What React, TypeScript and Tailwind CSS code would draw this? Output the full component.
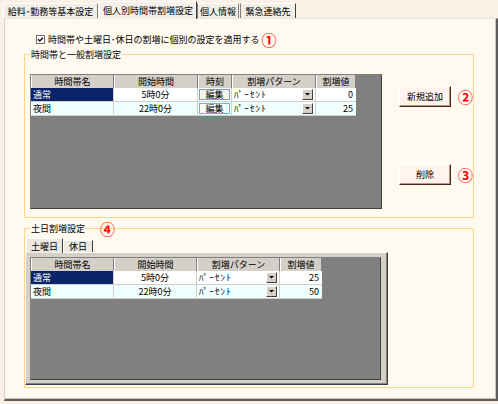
import React from "react";

const Arrow = () => (
  <div className="w-[11px] h-[11px] bg-[#D4D0C8] border border-t-white border-l-white border-r-[#404040] border-b-[#404040] flex items-center justify-center">
    <svg width="5" height="5" viewBox="0 0 5 5">
      <path d="M0 1h5L2.5 3.5z" fill="#000" />
    </svg>
  </div>
);

const H = ({ w, children }: { w: string; children: React.ReactNode }) => (
  <div
    className={`${w} h-full flex items-center justify-center bg-[#D4D0C8] border-l border-l-white border-r border-r-[#808080]`}
  >
    {children}
  </div>
);

const Pct = () => <span className="tracking-[1.2px]">ﾊﾟｰｾﾝﾄ</span>;

function Grid1() {
  return (
    <div className="w-[353px] h-[135px] bg-[#808080] border border-t-[#808080] border-l-[#808080] border-r-[#404040] border-b-[#404040] flex flex-col">
      <div className="h-[13px] flex w-[325px]">
        <H w="w-[83px]">時間帯名</H>
        <H w="w-[84px]">開始時間</H>
        <H w="w-[34px]">時刻</H>
        <H w="w-[84px]">割増パターン</H>
        <H w="w-[40px]">割増値</H>
      </div>
      <div className="h-[14px] flex w-[325px] bg-white border-b border-[#D4D0C8]">
        <div className="w-[83px] bg-[#0A246A] text-white flex items-center pl-[2px] border-r border-[#D4D0C8]">通常</div>
        <div className="w-[84px] flex items-center justify-center border-r border-[#D4D0C8]">5時0分</div>
        <div className="w-[34px] flex items-center justify-center p-[1px] border-r border-[#D4D0C8]">
          <div className="w-full h-full border border-[#7F9DB9] bg-[#F4F3EE] flex items-center justify-center">編集</div>
        </div>
        <div className="w-[84px] flex items-center justify-between pl-[2px] pr-[2px] border-r border-[#D4D0C8]">
          <Pct />
          <Arrow />
        </div>
        <div className="w-[40px] flex items-center justify-end pr-[3px]">0</div>
      </div>
      <div className="h-[14px] flex w-[325px] bg-[#F0FFFF] border-b border-[#D4D0C8]">
        <div className="w-[83px] flex items-center pl-[2px] border-r border-[#D4D0C8]">夜間</div>
        <div className="w-[84px] flex items-center justify-center border-r border-[#D4D0C8]">22時0分</div>
        <div className="w-[34px] flex items-center justify-center p-[1px] border-r border-[#D4D0C8]">
          <div className="w-full h-full border border-[#4FC7C7] bg-[#F8FDFD] flex items-center justify-center">編集</div>
        </div>
        <div className="w-[84px] flex items-center justify-between pl-[2px] pr-[2px] border-r border-[#D4D0C8]">
          <Pct />
          <Arrow />
        </div>
        <div className="w-[40px] flex items-center justify-end pr-[3px]">25</div>
      </div>
    </div>
  );
}

function Grid2() {
  return (
    <div className="w-[351px] h-[123px] bg-[#808080] border border-t-[#808080] border-l-[#808080] border-r-[#404040] border-b-[#404040] flex flex-col">
      <div className="h-[13px] flex w-[291px]">
        <H w="w-[83px]">時間帯名</H>
        <H w="w-[83px]">開始時間</H>
        <H w="w-[83px]">割増パターン</H>
        <H w="w-[42px]">割増値</H>
      </div>
      <div className="h-[14px] flex w-[291px] bg-white border-b border-[#D4D0C8]">
        <div className="w-[83px] bg-[#0A246A] text-white flex items-center pl-[2px] border-r border-[#D4D0C8]">通常</div>
        <div className="w-[83px] flex items-center justify-center border-r border-[#D4D0C8]">5時0分</div>
        <div className="w-[83px] flex items-center justify-between pl-[2px] pr-[2px] border-r border-[#D4D0C8]">
          <Pct />
          <Arrow />
        </div>
        <div className="w-[42px] flex items-center justify-end pr-[3px]">25</div>
      </div>
      <div className="h-[14px] flex w-[291px] bg-[#F0FFFF] border-b border-[#D4D0C8]">
        <div className="w-[83px] flex items-center pl-[2px] border-r border-[#D4D0C8]">夜間</div>
        <div className="w-[83px] flex items-center justify-center border-r border-[#D4D0C8]">22時0分</div>
        <div className="w-[83px] flex items-center justify-between pl-[2px] pr-[2px] border-r border-[#D4D0C8]">
          <Pct />
          <Arrow />
        </div>
        <div className="w-[42px] flex items-center justify-end pr-[3px]">50</div>
      </div>
    </div>
  );
}

const Btn = ({ children }: { children: React.ReactNode }) => (
  <div className="w-[52px] h-[21px] bg-[#FFF5EE] border border-t-white border-l-white border-r-[#4A2418] border-b-[#4A2418] shadow-[inset_-1px_-1px_0_#B89A8A] flex items-center justify-center">
    {children}
  </div>
);

const Num = ({ children }: { children: React.ReactNode }) => (
  <span className="text-[15px] leading-none text-[#FF0000] font-bold">{children}</span>
);

export default function App() {
  return (
    <div className="w-[498px] h-[404px] bg-[#FAF0E6] text-black text-[9px] leading-none font-['Noto_Sans_CJK_JP',sans-serif] overflow-hidden">
      {/* top tabs */}
      <div className="h-[18px] flex items-end pl-[3px]">
        <div className="w-[95px] h-[15px] bg-[#F1EEE6] border border-t-white border-l-white border-r-[#808080] border-b-0 flex items-center justify-center">
          給料･勤務等基本設定
        </div>
        <div className="relative z-10 -mb-[1px] ml-[1px] w-[98px] h-[18px] bg-[#F4F1EA] border border-t-white border-l-white border-r-[#404040] border-b-0 flex items-center justify-center pb-[1px]">
          個人別時間帯割増設定
        </div>
        <div className="w-[42px] h-[15px] bg-[#F1EEE6] border border-t-white border-l-[#808080] border-r-[#808080] border-b-0 flex items-center justify-center">
          個人情報
        </div>
        <div className="ml-[1px] w-[56px] h-[15px] bg-[#F1EEE6] border border-t-white border-l-[#808080] border-r-[#404040] border-b-0 flex items-center justify-center">
          緊急連絡先
        </div>
      </div>

      {/* main panel */}
      <div className="ml-[4px] w-[494px] h-[383px] bg-[#FFFAF0] border-t border-l border-t-[#E8E4DC] border-l-[#D8D4CC] border-r-2 border-b-2 border-r-[#5E5E5E] border-b-[#5E5E5E] shadow-[inset_-1px_-1px_0_#C8C4BC] pl-[19px]">
        {/* checkbox row */}
        <div className="mt-[13px] ml-[12px] h-[14px] flex items-center">
          <div className="w-[9px] h-[9px] border border-[#6C6C6C] bg-white flex items-center justify-center">
            <svg width="7" height="7" viewBox="0 0 7 7">
              <path d="M1 3.2L2.8 5L6 1.6" stroke="#000" strokeWidth="1.3" fill="none" />
            </svg>
          </div>
          <span className="ml-[3px]">時間帯や土曜日･休日の割増に個別の設定を適用する</span>
          <span className="ml-[2px]">
            <Num>①</Num>
          </span>
        </div>

        {/* group 1 */}
        <div className="relative mt-[8px] w-[450px] h-[164px] border border-[#FFD584] pl-[5px] pt-[19px] flex">
          <span className="absolute left-[5px] -top-[5px] bg-[#FFFAF0] px-[1px]">時間帯と一般割増設定</span>
          <Grid1 />
          <div className="ml-[17px] flex flex-col">
            <div className="mt-[12px] flex items-center">
              <Btn>新規追加</Btn>
              <span className="ml-[7px]">
                <Num>②</Num>
              </span>
            </div>
            <div className="mt-[57px] flex items-center">
              <Btn>削除</Btn>
              <span className="ml-[7px]">
                <Num>③</Num>
              </span>
            </div>
          </div>
        </div>

        {/* group 2 */}
        <div className="relative mt-[10px] w-[450px] h-[160px] border border-[#FFD584] pt-[9px]">
          <span className="absolute left-[5px] -top-[5px] bg-[#FFFAF0] px-[1px]">土日割増設定</span>
          <span className="absolute left-[75px] -top-[8px]">
            <Num>④</Num>
          </span>
          <div className="flex items-end h-[14px] ml-[1px]">
            <div className="relative z-10 -mb-[1px] w-[37px] h-[15px] bg-[#ECE9E0] border border-t-white border-l-white border-r-[#404040] border-b-0 flex items-center justify-center">
              土曜日
            </div>
            <div className="w-[30px] h-[12px] bg-[#ECE9E0] border border-t-white border-l-white border-r-[#404040] border-b-0 flex items-center justify-center">
              休日
            </div>
          </div>
          <div className="w-[363px] h-[133px] bg-[#D4D0C8] border border-t-white border-l-white border-r-[#404040] border-b-[#404040] shadow-[inset_-1px_-1px_0_#808080] pl-[4px] pt-[4px]">
            <Grid2 />
          </div>
        </div>
      </div>
    </div>
  );
}
